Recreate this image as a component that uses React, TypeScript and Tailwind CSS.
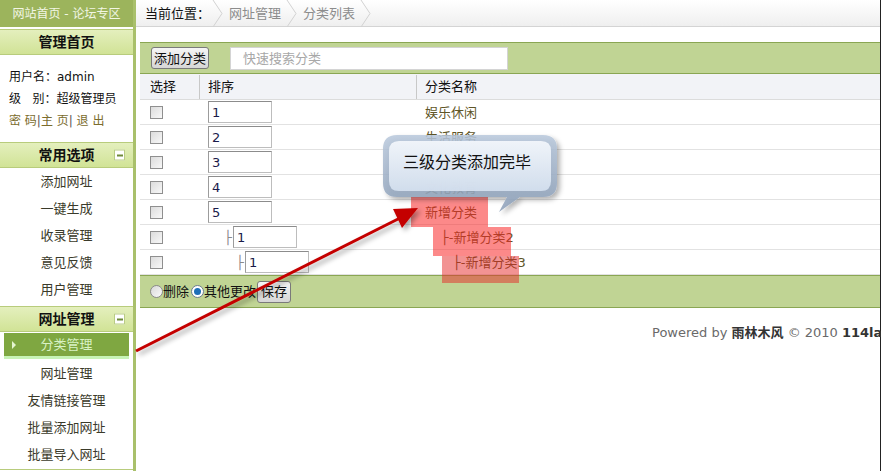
import React from 'react';

const FONT = { fontFamily: '"DejaVu Sans", "Noto Sans CJK SC", sans-serif' };

const Minus = () => (
  <span className="absolute right-[8px] top-1/2 -translate-y-1/2 w-[11px] h-[11px] bg-white border border-[#b9cc84] flex items-center justify-center">
    <span className="w-[6px] h-[2px] bg-[#6f8a3a]" />
  </span>
);

const SectionHead = ({ title, minus = true }: { title: string; minus?: boolean }) => (
  <div className="relative h-[26px] flex items-center justify-center bg-gradient-to-b from-[#e4efbd] to-[#d1e396] border-y border-[#b8cc7c] text-[14px] font-bold text-[#111] leading-none">
    {title}
    {minus && <Minus />}
  </div>
);

const NavItem = ({ label }: { label: string }) => (
  <div className="h-[27px] flex items-center justify-center text-[13px] text-[#3a3a2a] leading-none">{label}</div>
);

const Checkbox = () => (
  <span className="inline-block w-[13px] h-[13px] border border-[#8f8f8f] bg-gradient-to-br from-[#dcdcdc] to-[#f8f8f8]" />
);

const NumInput = ({ v }: { v: string }) => (
  <span className="inline-flex items-center w-[64px] h-[22px] border border-[#bdbdbd] border-t-[#8c8c8c] border-l-[#9c9c9c] bg-white pl-[3px] text-[13px] text-[#1a1a4a] leading-none">
    {v}
  </span>
);

const Tee = () => <span className="text-[13px] text-[#8a8a8a] leading-none mr-[1px]">├</span>;

type Row = { n: string; name: string; indent: number; nameIndent: number; tee?: boolean };

const rows: Row[] = [
  { n: '1', name: '娱乐休闲', indent: 0, nameIndent: 0 },
  { n: '2', name: '生活服务', indent: 0, nameIndent: 0 },
  { n: '3', name: '电脑网络', indent: 0, nameIndent: 0 },
  { n: '4', name: '文化教育', indent: 0, nameIndent: 0 },
  { n: '5', name: '新增分类', indent: 0, nameIndent: 0 },
  { n: '1', name: '├-新增分类2', indent: 25, nameIndent: 16, tee: true },
  { n: '1', name: '├-新增分类3', indent: 37, nameIndent: 28, tee: true },
];

const Chevron = () => (
  <svg width="12" height="27" viewBox="0 0 12 27" className="mx-[2px]">
    <path d="M1 0 L10 13.5 L1 27" fill="none" stroke="#d2d2d2" strokeWidth="1" />
  </svg>
);

const Btn = ({ label, className = '' }: { label: string; className?: string }) => (
  <span className={`inline-flex items-center justify-center h-[22px] border border-[#7a7a7a] rounded-[3px] bg-gradient-to-b from-[#f6f6f6] to-[#d6d6d6] text-[13px] text-[#111] leading-none ${className}`}>
    {label}
  </span>
);

export default function App() {
  return (
    <div className="relative w-[881px] h-[471px] overflow-hidden bg-white flex" style={FONT}>
      {/* Sidebar */}
      <div className="w-[136px] shrink-0 flex flex-col border-r-[3px] border-[#a9c06b]">
        <div className="h-[27px] bg-[#9cb45c] text-[#f2f6e4] text-[12px] flex items-center justify-center leading-none">
          网站首页 - 论坛专区
        </div>
        <div className="h-[2px]" />
        <SectionHead title="管理首页" minus={false} />
        <div className="pt-[11px] pb-[10px] pl-[9px] text-[12px] text-[#111] leading-[22px]">
          <div>用户名：admin</div>
          <div>级&nbsp;&nbsp;&nbsp;别：超级管理员</div>
          <div className="text-[#7b6c2c]">
            密 码<span className="text-[#555]">|</span>主 页<span className="text-[#555]">|</span> 退 出
          </div>
        </div>
        <SectionHead title="常用选项" />
        <NavItem label="添加网址" />
        <NavItem label="一键生成" />
        <NavItem label="收录管理" />
        <NavItem label="意见反馈" />
        <NavItem label="用户管理" />
        <div className="h-[3px]" />
        <SectionHead title="网址管理" />
        <div className="h-[28px] pt-[1px] px-[4px]">
          <div className="relative h-[23px] bg-[#7fa741] flex items-center justify-center text-[13px] text-[#d9f2c4] leading-none">
            <span className="absolute left-[8px] w-0 h-0 border-y-[4px] border-y-transparent border-l-[4px] border-l-[#e4f5d0]" />
            分类管理
          </div>
          <div className="h-[3px] bg-[#c7f3b6]" />
        </div>
        <NavItem label="网址管理" />
        <NavItem label="友情链接管理" />
        <NavItem label="批量添加网址" />
        <NavItem label="批量导入网址" />
        <div className="border-t border-[#b8cc7c] mt-[1px]" />
      </div>

      {/* Main */}
      <div className="flex-1 flex flex-col min-w-0 border-r border-[#222]">
        <div className="h-[27px] flex items-center pl-[9px] bg-gradient-to-b from-[#ffffff] to-[#efefef] border-b border-[#d4d4d4] text-[13px] leading-none">
          <span className="text-[#111]">当前位置：</span>
          <Chevron />
          <span className="text-[#8c8c8c] px-[3px]">网址管理</span>
          <Chevron />
          <span className="text-[#8c8c8c] px-[3px]">分类列表</span>
          <Chevron />
        </div>

        <div className="mt-[15px] ml-[4px] flex flex-col">
          <div className="h-[32px] bg-[#c0d494] border-y border-[#8aa653] flex items-center pl-[11px]">
            <Btn label="添加分类" className="w-[58px]" />
            <span className="ml-[21px] w-[278px] h-[23px] bg-white border border-[#d4d4d4] flex items-center pl-[12px] text-[13px] text-[#a8a8a8] leading-none">
              快速搜索分类
            </span>
          </div>

          <div className="h-[26px] bg-[#f2f3f7] border-b border-[#dcdcdc] flex items-center text-[13px] text-[#111] leading-none">
            <div className="w-[59px] pl-[10px]">选择</div>
            <div className="w-px h-[24px] bg-[#c8c8c8]" />
            <div className="w-[216px] pl-[8px]">排序</div>
            <div className="w-px h-[24px] bg-[#c8c8c8]" />
            <div className="pl-[8px]">分类名称</div>
          </div>

          {rows.map((r, i) => (
            <div key={i} className="h-[25px] border-b border-[#e2e2e2] flex items-center text-[13px] leading-none">
              <div className="w-[60px] pl-[10px] flex items-center">
                <Checkbox />
              </div>
              <div className="w-[217px] pl-[8px] flex items-center">
                <span style={{ width: r.indent }} className="flex justify-end">
                  {r.tee && <Tee />}
                </span>
                <NumInput v={r.n} />
              </div>
              <div className="text-[#5e5526]" style={{ paddingLeft: 8 + r.nameIndent }}>
                {r.name}
              </div>
            </div>
          ))}

          <div className="h-[33px] bg-[#c0d494] border-y border-[#8aa653] flex items-center pl-[10px] text-[13px] text-[#111] leading-none">
            <span className="w-[13px] h-[13px] rounded-full border border-[#8a8a8a] bg-gradient-to-br from-[#d8d8d8] to-[#fafafa]" />
            <span>删除</span>
            <span className="ml-[2px] w-[13px] h-[13px] rounded-full border border-[#6a7c8c] bg-white flex items-center justify-center">
              <span className="w-[7px] h-[7px] rounded-full bg-[#1d6fb8]" />
            </span>
            <span>其他更改</span>
            <Btn label="保存" className="w-[34px] ml-[1px]" />
          </div>

          <div className="mt-[17px] pl-[512px] whitespace-nowrap text-[13px] leading-[16px] text-[#6a6a6a]">
            Powered by <b className="text-[#333]">雨林木风</b> © 2010 <b className="text-[#333]">114la.com</b>
          </div>
        </div>
      </div>

      {/* Red highlight overlays */}
      <div className="absolute left-[411px] top-[197px] w-[77px] h-[30px] bg-[rgba(250,40,40,0.55)]" />
      <div className="absolute left-[433px] top-[227px] w-[78px] h-[29px] bg-[rgba(250,40,40,0.55)]" />
      <div className="absolute left-[442px] top-[256px] w-[77px] h-[27px] bg-[rgba(230,40,40,0.5)]" />

      {/* Speech bubble and arrow */}
      <svg className="absolute left-0 top-0 pointer-events-none" width="881" height="471">
        <defs>
          <linearGradient id="bub" x1="0" y1="0" x2="0" y2="1">
            <stop offset="0" stopColor="#f2f6fb" />
            <stop offset="1" stopColor="#d3dfee" />
          </linearGradient>
          <linearGradient id="bubEdge" x1="0" y1="0" x2="0" y2="1">
            <stop offset="0" stopColor="#b8c8dc" />
            <stop offset="1" stopColor="#8a9db6" />
          </linearGradient>
          <filter id="sh" x="-20%" y="-20%" width="140%" height="150%">
            <feDropShadow dx="3" dy="3" stdDeviation="2.5" floodColor="#000" floodOpacity="0.35" />
          </filter>
        </defs>
        <g filter="url(#sh)">
          <path
            d="M397 135 H543 Q557 135 557 149 V183 Q557 197 543 197 H520 L499 212 L507 197 H397 Q383 197 383 183 V149 Q383 135 397 135 Z"
            fill="url(#bubEdge)"
            fillOpacity="0.85"
          />
          <path
            d="M399 141 H541 Q551 141 551 151 V181 Q551 191 541 191 H399 Q389 191 389 181 V151 Q389 141 399 141 Z"
            fill="url(#bub)"
            fillOpacity="0.96"
          />
        </g>
        <g filter="url(#sh)">
          <line x1="136" y1="351" x2="402" y2="217" stroke="#c40000" strokeWidth="3" />
          <polygon points="418,208 402,228 393,209" fill="#c40000" />
        </g>
      </svg>
      <div className="absolute left-[403px] top-[153px] text-[16px] leading-[20px] text-[#111]" style={FONT}>
        三级分类添加完毕
      </div>
    </div>
  );
}
